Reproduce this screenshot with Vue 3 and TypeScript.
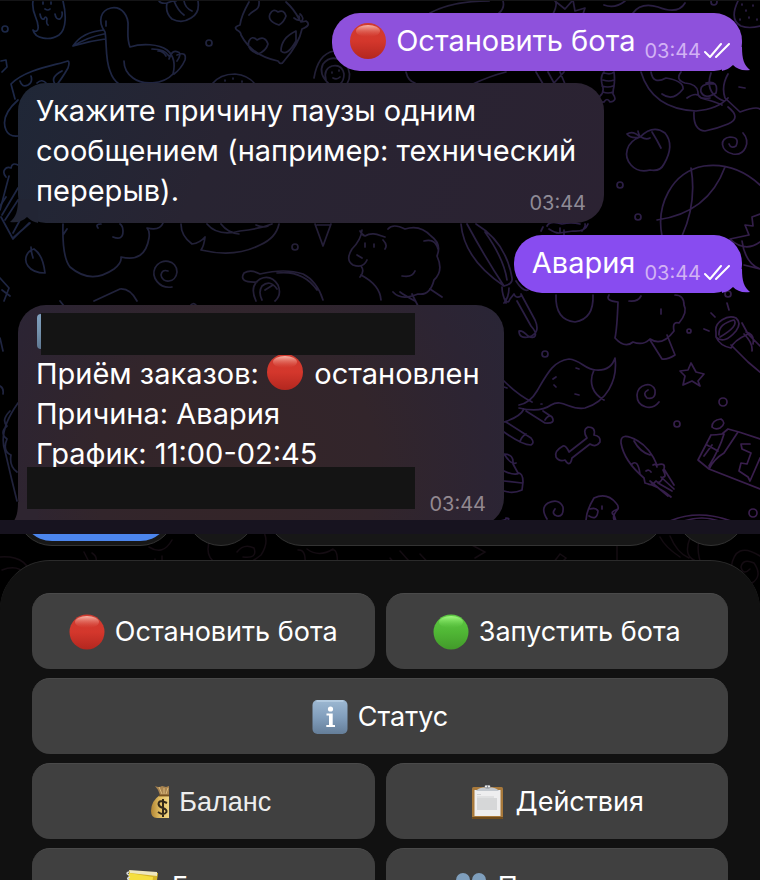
<script setup lang="ts">
interface KeyButton {
  icon: 'red' | 'green' | 'info' | 'bag' | 'clipboard' | 'ledger' | 'people'
  label: string
  wide?: boolean
  plain?: boolean
}

const keys: KeyButton[] = [
  { icon: 'red', label: 'Остановить бота' },
  { icon: 'green', label: 'Запустить бота' },
  { icon: 'info', label: 'Статус', wide: true },
  { icon: 'bag', label: 'Баланс', plain: true },
  { icon: 'clipboard', label: 'Действия' },
  { icon: 'ledger', label: 'Блокнот' },
  { icon: 'people', label: 'Поставщики' },
]

const circles: [number, number, number][] = [
  [5, 28, 3], [209, 42, 3], [295, 246, 3], [620, 184, 3], [638, 216, 3], [728, 293, 3],
  [545, 353, 3], [689, 330, 2], [723, 401, 4], [677, 423, 3], [753, 512, 4], [714, 1, 3],
]

const doodles: string[] = [
  // ghost
  'M33 0C31 12 38 17 38 25C39 31 35 31 33 29C35 38 50 40 59 34C67 28 66 12 63 0M40 13q1 6 4 5q2-4 3 0q-1 5 1 6M55 13q1 6 5 5q3-2 2-7M43 1v2M51 1v2M45 8q3 2 5 0',
  // pelican
  'M105 31C97 20 101 9 111 7C122 5 129 15 128 26C128 34 127 38 130 46C142 42 159 43 167 49C173 54 176 61 173 73C163 84 142 84 133 77C126 72 124 67 124 60M105 31C107 42 105 58 110 70Q113 79 119 83M106 20v5M104 29Q82 31 73 45Q89 40 105 38M104 33Q88 36 73 45M152 48Q165 48 169 55M158 50q5 0 8 5M169 58Q172 48 178 51C181 52 180 56 177 60M177 54Q187 50 185 59Q181 68 174 73',
  // basket
  'M159 0q2 3 8 2q-2 10 5 16q10 5 19-1q9-5 7-17M174 0q4 10 10 14M184 0q1 7 8 10M167 2q8-3 9-2',
  // cat with hearts
  'M249 1Q241 15 240 24Q233 26 237 29Q241 31 241 34Q252 55 278 60Q281 65 284 60Q299 43 302 28Q312 24 306 20Q300 22 299 18Q294 8 286 1M249 14C254 8 260 10 259 0M279 24Q267 20 270 13Q273 7 278 11Q284 8 286 15Q284 21 279 24M258 53Q246 48 249 40Q252 34 257 39Q265 34 268 43Q266 50 258 53M296 30Q281 37 281 50Q287 56 296 40ZM294 17q7 5 5-2M300 13q5 4 1 8',
  'M314 77Q318 53 334 50M329 83Q318 73 323 63Q332 52 345 62Q353 73 347 83M326 79q-3-11 6-14q10-2 12 8q0 7-4 10M332 71v1M339 69v1M333 77q4 2 7-1',
  'M212 83Q220 73 235 73Q248 74 255 83M225 79v1M233 77v1M242 80v1',
  // pizza slice and cone
  'M1 60L6 59L7 66L2 71M11 83C25 68 57 64 68 60Q70 61 68 67Q61 79 55 86M11 83L15 98M20 80q2 7 8 4q5-3 3-9M37 82q5-5 10 1M55 83Q50 76 62 70M18 99Q0 115 6 129Q9 136 18 135',
  'M6 176C1 170 6 165 11 167Q12 161 18 164M9 175L0 209M18 187L2 214M18 199L5 219M1 216L13 238L29 222M26 208L13 232M30 222L13 237',
  // small leaf and lower left scraps
  'M31 246C31 253 33 255 33 257M34 248C27 250 23 258 28 265Q33 272 45 272Q43 254 34 248M0 277L9 287L4 300M2 289l8 6M94 300L120 288Q130 287 137 300M0 337l3 13M0 385q4 2 3 8M18 402Q-2 430 5 450Q11 476 17 500M10 410q-9 9-3 15q-8 7 0 13q-5 12 4 16q-2 11 6 17',
  // broccoli
  'M63 223Q62 256 70 266Q91 284 114 268Q122 262 121 256Q145 262 149 237Q150 230 147 227Q160 230 163 222M63 234l4-6M101 223q-6 0-3 4M113 236q10 4 10-6q0-5-3-7',
  // swirl
  'M172 286C159 288 151 276 155 267C161 256 177 259 177 271C176 282 162 283 161 274Q162 268 168 270',
  // croissant, spoon, fox, lamb
  'M181 223Q181 235 192 243Q200 242 205 236Q204 245 201 249Q235 257 260 244Q276 237 279 223M207 223Q218 236 240 230M221 223q7 9 18 10M240 230q19-2 32-7M256 224q7 3 12 1',
  'M315 223L323 245L331 223M317 224h13',
  'M360 230Q362 234 365 235C373 230 380 235 385 236M362 229Q361 239 352 248Q345 259 353 264Q363 268 367 259M365 242v4M374 243v3M357 254l5 3M361 265q4 5-1 11M361 274q19 10 20 25M388 228Q393 222 405 228Q420 223 431 235Q442 243 437 255Q444 270 434 279Q430 295 418 293Q401 300 393 291M383 239q5 5 2 9M424 240q11-3 14 8M402 275q10 2 13-5',
  'M256 300Q249 285 260 278Q271 273 278 284Q282 294 275 300M257 281q-19 1-13-9q7-4 16 1Q285 267 303 273Q317 280 323 299M262 299q-4-8 0-14q8-7 15 3M265 289l8-5M277 272q26-3 40 17',
  // umbrella
  'M461 223Q464 258 504 285Q513 283 512 277Q506 241 476 223M467 223Q486 258 504 285M485 231Q504 258 507 279M502 286q0 7 4 16M516 280q7 11 12 9M509 287q0 9-5 15M505 298q3 6 5 0l4-5q2 5 7 2M517 300L531 325C539 334 535 339 528 335Q522 329 519 330Q519 338 529 336Q541 332 535 319L521 293',
  'M541 230l2-4M547 225Q550 219 562 223Q571 221 580 223M549 228q6 4 10 4l14-2q12 1 15-7M560 227v5M564 229v6M582 230q4-5 3-7',
  // egg and tree
  'M556 294Q555 319 575 321Q594 318 593 294M609 294Q605 300 618 301Q617 328 615 337Q625 348 633 341Q643 345 650 338Q662 346 674 330Q672 320 679 322Q688 311 684 304Q684 294 675 294M629 300q9 1 12-5M661 308v5M650 339L662 358Q667 359 675 354L667 334',
  // top scraps
  'M430 12Q452 0 489 0M503 0q2 7-4 12M553 13q5-10 2-13l10 8l8-9l2 11l10-3l-2 6M604 4q11 4 21-4M633 12Q641 1 658 6Q678 14 685 2M738 0q-9 19 3 25q8 3 19 0M742 3v1M746 9v1M753 4v1M749 16v1M757 18v1M740 18v1',
  // sausage and plate
  'M406 71Q408 80 415 82M473 83Q490 75 506 71M536 71L543 83M548 71L554 82L564 71M560 71l5 12M604 72q7 2 10-1q1 7 0 14q-1 4-1 8q5 7-3 8q-3-5-6 0q-7 1-4-6q5-4 2-12q-2-8 2-12M603 79q6 2 11 0M602 85q6 2 11 0M603 91q5 2 10 0',
  'M641 71Q652 108 696 110Q718 108 728 97M651 71q2 13 15 6q18 3 17 11q-10 13-21 5M681 71q-6 8 4 11q12 1 13 9q-1 8 12 6M687 97q10-7 14 0q18 5 21 7M706 82q13-3 10 10q-11 7-15-1q-2-9 13-8M711 72q-7 20 13 28M728 73q-7 12-3 24l15 14Q756 105 760 108M739 86l6 1M694 111Q693 129 705 130Q716 128 728 123Q742 117 728 106',
  // apple
  'M640 136C626 141 623 155 631 164Q638 172 650 169Q660 171 664 163Q675 144 665 132Q653 123 640 136ZM640 136q-7-7-13-3q4 5 13 3q-2-5-2-6M652 131q5 8 9 16M641 136q5 3 9 1',
  'M743 132C751 141 745 155 733 153C720 150 719 137 730 136Q740 136 736 145Q731 148 729 143',
  // ball
  'M662 235C656 205 671 171 704 165Q735 161 760 184M691 167Q697 201 682 235M725 166Q708 212 657 219M760 213l-8 3l1 9l-8-1l4 10l-19 4q15 14 30 3M744 264l16 4M742 240q3 22 18 28',
  // fox with a bushy tail
  'M519 404Q530 402 537 390C547 373 553 360 569 358C581 359 585 369 596 369Q611 370 615 357C618 380 606 401 585 407C570 410 563 397 551 404Q540 412 519 407M594 369C588 382 593 393 604 399M553 378l3-2M554 384l2 2M576 367l3 1M575 393l4 1M541 403h1M504 380Q518 394 532 401M504 386l3 1M524 408Q520 416 504 421M526 410L545 422Q556 423 552 416L543 410M545 419q3-5 6-4M504 431Q522 444 531 444Q535 442 531 437L506 421M520 441q1-5 6-8',
  // bone
  'M563 445Q554 450 556 456Q559 461 565 459Q570 467 572 457L590 443Q596 447 600 441Q601 435 594 434Q596 426 588 426Q582 429 587 437L569 451Q566 444 563 445Z',
  // small swirl, star
  'M659 401C652 410 637 407 637 394C638 383 652 380 655 389Q656 399 647 397Q642 392 648 389',
  'M691 362L696 371L704 373L698 380L700 385L692 380L683 384L685 375L680 370L688 369Z',
  // torch
  'M716 331C714 321 728 313 736 317Q742 322 736 330Q724 344 716 336ZM719 334q-1-11 15-15q5 6-14 17M742 322L748 333Q733 340 731 347Q720 345 716 336M744 333Q753 342 752 350M731 344L748 361L760 371M748 333L760 345M746 331q9 2 7 12M727 302l2 7M711 312l4 4M704 328l5 2',
  // rocket
  'M621 442Q620 430 638 440Q650 447 657 464Q666 461 664 468L674 484M621 442Q624 460 644 477L645 482Q659 485 671 496M634 440Q640 451 650 454M632 463Q638 458 640 473M646 470q3-2 5 1M653 464q3-2 4 2M648 483q4 2 8-3q4 4 7-4q4 0 0-7M658 482L672 490M661 476L674 488M650 480L668 495',
  // gift box
  'M711 434L698 459L709 468L760 488M711 434Q716 434 722 433L728 428L739 431L760 438M707 444l11 6M704 455l8-11M709 468Q714 458 724 452L738 431M724 433Q720 447 709 465M712 426q0-7 9-8q6 4-1 9q-5 2-8-1M750 443L741 443L742 448L751 452L747 463L741 462L739 470L748 476L750 480L760 457',
  // cupcake, chick, swirl, plate
  'M504 490Q513 493 522 489L523 481Q523 472 518 472L513 463Q514 453 504 453Q511 464 516 462M504 480L522 482M504 470q11 5 15 2',
  'M547 518Q540 507 548 502Q559 497 563 506Q564 516 557 515Q551 513 555 508M586 520Q586 510 594 497Q607 491 616 502Q619 505 618 508Q609 511 614 514L616 520M589 515q8 5 9-5q-2-4-8-2M602 505v3M618 508q-7 8-3 12M500 520q7-1 6-3q5 0 1 3',
  'M670 520Q698 508 731 520M684 520Q702 514 719 520',
  'M400 291q4 3 15 9M430 288l12 8M412 293l6 12M190 305q3-4 6-1M0 205l6-9M60 300l4 5',
]

const faint: string[] = [
  'M0 23q29-2 32 23M2 36q15-6 24 4M72 27q2 14 8 10q8 3 13-3q7-10-1-15M84 18l5 10M149 13q14 9 23-7M155 25v10M162 22v11M210 5q-6 17 6 24q17 14 45-8q10-15 0-27M237 18q7-9 17-4q4 11-11 9M298 16q10-1 6 21M332 16q7-2 5 21M307 15q12 9 26 0',
  'M390 24l12 14M400 17l17 19M420 20l17 18M470 10l15 8l-10 6M550 33l10-13l6 4l-13 13M617 11v29M660 3q5 10 20 20M670 2q7 17 19 22M690 4q-8 20 9 24M700 4q-5 11 3 32M692 30q5-6 10 0',
  'M760 22q-25-16-29 12q2 18 21 15q11-7 2-20q-11-5-13 4q2 9 9 2',
]
</script>

<template>
  <main class="page">
    <section class="chat">
      <svg class="wallpaper" viewBox="0 0 760 520" preserveAspectRatio="xMidYMin slice" aria-hidden="true">
        <defs>
          <linearGradient id="ink" gradientUnits="userSpaceOnUse" x1="0" y1="80" x2="760" y2="480">
            <stop offset="0" stop-color="#1c2848" />
            <stop offset="0.35" stop-color="#231f35" />
            <stop offset="0.7" stop-color="#2b1e45" />
            <stop offset="1" stop-color="#3a1e4d" />
          </linearGradient>
        </defs>
        <g fill="none" stroke="url(#ink)" stroke-width="1.7" stroke-linecap="round" stroke-linejoin="round">
          <path v-for="(d, i) in doodles" :key="i" :d="d" />
          <circle v-for="(c, i) in circles" :key="'c' + i" :cx="c[0]" :cy="c[1]" :r="c[2]" />
        </g>
      </svg>

      <article class="bubble out first">
        <p class="text">
          <svg class="emoji" viewBox="0 0 36 36" aria-hidden="true"><circle cx="18" cy="18" r="18" fill="url(#redBall)" /><ellipse cx="18" cy="8" rx="12" ry="6" fill="url(#shine)" /></svg>
          Остановить бота
        </p>
        <span class="meta"><time>03:44</time>
          <svg class="ticks" viewBox="0 0 26 16" aria-hidden="true"><path d="M1 9L6 14L17 1M12 14L25 1" /></svg>
        </span>
        <svg class="tail" viewBox="0 0 28 24" aria-hidden="true"><path d="M20 0C20 12 22 18 28 23C20 24 15 22 11 18C7 22 3 23 0 24V0Z" /></svg>
      </article>

      <article class="bubble in reason">
        <p class="text">Укажите причину паузы одним сообщением (например: технический перерыв).</p>
        <time class="corner">03:44</time>
        <svg class="tail" viewBox="0 0 28 24" aria-hidden="true"><path d="M8 0C8 12 6 18 0 23C8 24 13 22 17 18C21 22 25 23 28 24V0Z" /></svg>
      </article>

      <article class="bubble out second">
        <p class="text">Авария</p>
        <span class="meta"><time>03:44</time>
          <svg class="ticks" viewBox="0 0 26 16" aria-hidden="true"><path d="M1 9L6 14L17 1M12 14L25 1" /></svg>
        </span>
        <svg class="tail" viewBox="0 0 28 24" aria-hidden="true"><path d="M20 0C20 12 22 18 28 23C20 24 15 22 11 18C7 22 3 23 0 24V0Z" /></svg>
      </article>

      <article class="bubble in status">
        <div class="cover top"></div>
        <p class="text line">
          Приём заказов:
          <svg class="emoji" viewBox="0 0 36 36" aria-hidden="true"><circle cx="18" cy="18" r="18" fill="url(#redBall)" /><ellipse cx="18" cy="8" rx="12" ry="6" fill="url(#shine)" /></svg>
          остановлен
        </p>
        <p class="text">Причина: Авария</p>
        <p class="text">График: 11:00-02:45</p>
        <div class="cover bottom"></div>
        <time class="corner">03:44</time>
        <svg class="tail" viewBox="0 0 28 24" aria-hidden="true"><path d="M8 0C8 12 6 18 0 23C8 24 13 22 17 18C21 22 25 23 28 24V0Z" /></svg>
      </article>
    </section>

    <div class="divider"></div>

    <section class="bottom-area">
      <svg class="wallpaper" viewBox="0 0 760 60" preserveAspectRatio="xMidYMin slice" aria-hidden="true">
        <g fill="none" stroke="#140c12" stroke-width="1.5" stroke-linecap="round">
          <path v-for="(d, i) in faint" :key="i" :d="d" />
        </g>
      </svg>
      <div class="composer">
        <button class="menu" type="button" aria-label="Меню"></button>
        <button class="round" type="button" aria-label="Прикрепить"></button>
        <input class="field" type="text" aria-label="Сообщение" />
        <button class="round" type="button" aria-label="Голосовое сообщение"></button>
      </div>

      <div class="keyboard">
        <button v-for="key in keys" :key="key.label" type="button" class="key" :class="{ wide: key.wide, plain: key.plain }">
          <svg class="emoji" viewBox="0 0 36 36" aria-hidden="true">
            <template v-if="key.icon === 'red'">
              <circle cx="18" cy="18" r="17.5" fill="url(#redBall)" /><ellipse cx="18" cy="8" rx="12" ry="6" fill="url(#shine)" />
            </template>
            <template v-else-if="key.icon === 'green'">
              <circle cx="18" cy="18" r="17.5" fill="url(#greenBall)" /><ellipse cx="18" cy="8" rx="12" ry="6" fill="url(#greenShine)" />
            </template>
            <template v-else-if="key.icon === 'info'">
              <rect x="0.5" y="1" width="35" height="34" rx="5" fill="url(#infoTile)" />
              <path d="M5 2H31" stroke="#b9cfe4" stroke-width="1.4" stroke-linecap="round" />
              <circle cx="18.5" cy="10" r="2.6" fill="#fff" />
              <path d="M14.5 14.5H20.7V26H23V28H14.3V26H17V16.5H14.5Z" fill="#fff" />
            </template>
            <template v-else-if="key.icon === 'bag'">
              <path d="M20 2Q24 4 27 2L31 3L34 2V11Q32 12 25 11Q24 6 20 2Z" fill="#a98450" />
              <path d="M24 3L27 10M29 4V10M33 4L31 10" stroke="#d9ba7c" stroke-width="1" fill="none" />
              <path d="M25 11H34V34H22Q16 34 16 27Q16 17 25 11Z" fill="url(#bagGold)" />
              <path d="M24 11.5H34" stroke="#75511e" stroke-width="1.8" />
              <path d="M32 19Q24 15 23.5 20Q24 23 28 24Q32 25.5 31.5 28Q29 32 23 28M28 15V33" stroke="#33291a" stroke-width="2" fill="none" />
            </template>
            <template v-else-if="key.icon === 'clipboard'">
              <rect x="2" y="3" width="31" height="32" rx="1.5" fill="#a8793b" />
              <path d="M2 33H33V34Q33 35 32 35H3Q2 35 2 34Z" fill="#6f4b1d" />
              <path d="M4.5 6H30.5V32H4.5Z" fill="#eeeeef" />
              <path d="M7 14H27V26H7Z" fill="#d6d7d8" />
              <path d="M7 10.5H11M7 13H24" stroke="#c9cacd" stroke-width="0.8" />
              <path d="M6 7Q8 4 13 3.5H22Q27 4 29 7Z" fill="#c3c8ce" />
              <rect x="14.5" y="1" width="6" height="3.5" rx="1.7" fill="#8b9097" />
              <circle cx="16" cy="2.5" r="0.9" fill="#fff" /><circle cx="19" cy="2.5" r="0.9" fill="#fff" />
            </template>
            <template v-else-if="key.icon === 'ledger'">
              <path d="M3 2L32 4L28 34L1 31Z" fill="#d6b62a" />
              <path d="M3 1L31 3V7L4 4Z" fill="#eee7be" />
              <path d="M3 4L27 8L24 34L1 30Z" fill="#f5df3f" />
              <path d="M3 3Q-1 4 3 6M4 8Q0 9 3 11" fill="none" stroke="#d7dadd" stroke-width="1.5" />
            </template>
            <template v-else>
              <circle cx="11" cy="11" r="7" fill="#7f9fbd" /><circle cx="27" cy="11" r="7" fill="#7f9fbd" />
              <path d="M0 34Q2 20 11 20T22 34M17 34Q19 20 27 20T36 34" fill="#6486a7" />
            </template>
          </svg>
          <span>{{ key.label }}</span>
        </button>
      </div>
    </section>

    <svg class="defs" aria-hidden="true">
      <defs>
        <linearGradient id="redBall" x1="0" y1="0" x2="0" y2="1"><stop offset="0" stop-color="#cf3b30" /><stop offset="0.5" stop-color="#d4372c" /><stop offset="1" stop-color="#b3271f" /></linearGradient>
        <linearGradient id="greenBall" x1="0" y1="0" x2="0" y2="1"><stop offset="0" stop-color="#5fc845" /><stop offset="0.5" stop-color="#50b735" /><stop offset="1" stop-color="#429a2a" /></linearGradient>
        <linearGradient id="shine" x1="0" y1="0" x2="0" y2="1"><stop offset="0" stop-color="#f7b5a8" /><stop offset="1" stop-color="#e05a4c" stop-opacity="0" /></linearGradient>
        <linearGradient id="greenShine" x1="0" y1="0" x2="0" y2="1"><stop offset="0" stop-color="#a2fb80" /><stop offset="1" stop-color="#67cf4b" stop-opacity="0" /></linearGradient>
        <linearGradient id="infoTile" x1="0" y1="0" x2="0" y2="1"><stop offset="0" stop-color="#9db8d2" /><stop offset="0.5" stop-color="#829fbd" /><stop offset="1" stop-color="#657e99" /></linearGradient>
        <linearGradient id="bagGold" x1="0" y1="0" x2="1" y2="0"><stop offset="0" stop-color="#b08434" /><stop offset="0.5" stop-color="#e3bf63" /><stop offset="1" stop-color="#f0d583" /></linearGradient>
      </defs>
    </svg>
  </main>
</template>

<style>
body {
  margin: 0;
  background: #000;
}
</style>

<style scoped>
.page {
  height: 100vh;
  overflow: hidden;
  background: #000;
  color: #fff;
  font-family: Inter, "Noto Sans", sans-serif;
}
.defs {
  position: absolute;
  width: 0;
  height: 0;
}
.chat {
  position: relative;
  display: flex;
  flex-direction: column;
  align-items: flex-start;
  gap: 12px;
  padding: 12px 18px 0;
  overflow: hidden;
  border-top: 1px solid #141416;
  box-sizing: border-box;
}
.wallpaper {
  position: absolute;
  top: 0;
  left: 0;
  width: 100%;
  height: 100%;
}
.bubble {
  position: relative;
  isolation: isolate;
  box-sizing: border-box;
  border-radius: 28px;
}
.text {
  margin: 0;
  font-size: 29px;
  line-height: 40px;
}
.emoji {
  flex: none;
  width: 36px;
  height: 36px;
}
.line .emoji {
  margin-right: 3px;
  vertical-align: -6px;
}
time {
  font-size: 20px;
  line-height: 24px;
}
.out {
  align-self: flex-end;
  display: flex;
  align-items: center;
  gap: 9px;
  height: 58px;
  padding: 0 12px 2px 18px;
}
.out .text {
  display: flex;
  align-items: center;
  gap: 10px;
}
.first {
  background: #8e51dc;
}
.second {
  background: #884cf0;
}
.first .tail {
  fill: #8e51dc;
}
.second .tail {
  fill: #884cf0;
}
.meta {
  display: flex;
  align-items: center;
  gap: 3px;
  padding-top: 20px;
  color: #d2b2f4;
}
.ticks {
  width: 26px;
  height: 16px;
  fill: none;
  stroke: #fff;
  stroke-width: 2;
  stroke-linecap: round;
  stroke-linejoin: round;
}
.tail {
  position: absolute;
  z-index: -1;
  bottom: 0;
  width: 28px;
  height: 24px;
}
.out .tail {
  right: -8px;
}
.in {
  padding: 8px 18px;
}
.in .tail {
  left: -8px;
}
.in time {
  color: #8f8b96;
}
.corner {
  position: absolute;
  right: 18px;
  bottom: 8px;
}
.reason {
  width: 586px;
  max-width: 100%;
  padding-bottom: 12px;
  background: linear-gradient(115deg, #1f2737 0%, #282432 35%, #2b2232 100%);
}
.reason .tail {
  fill: #222534;
}
.status {
  width: 486px;
  max-width: 100%;
  padding-bottom: 13px;
  margin-bottom: -6px;
  background: radial-gradient(circle at 45% 75%, #342528 0%, #32252b 45%, #2c2433 80%, #292536 100%);
}
.status .tail {
  fill: #2e2530;
}
.status .corner {
  bottom: 10px;
  color: #938990;
}
.cover {
  position: relative;
  height: 42px;
  background: #141414;
}
.cover.top {
  width: 374px;
  margin: 0 0 -1px 5px;
}
.cover.top::before {
  content: "";
  position: absolute;
  top: 1px;
  left: -4px;
  width: 4px;
  height: 35px;
  border-radius: 4px 0 0 4px;
  background: linear-gradient(#7fa0bf, #7592ad 50%, #5f7892);
}
.cover.bottom {
  width: 388px;
  margin: -7px 0 4px -9px;
}
.line {
  white-space: nowrap;
}
.divider {
  height: 14px;
  background: #17131f;
}
.bottom-area {
  position: relative;
}
.bottom-area .wallpaper {
  height: 60px;
}
.composer {
  position: relative;
  display: flex;
  align-items: flex-end;
  gap: 9px;
  height: 12px;
  padding: 0 13px 14px 16px;
  overflow: hidden;
}
.composer > * {
  box-sizing: border-box;
  height: 72px;
  flex: none;
  padding: 0;
  border: 1px solid #333;
  border-radius: 36px;
  background: #171717;
}
.menu {
  width: 160px;
}
.menu::before {
  content: "";
  display: block;
  height: 62px;
  margin: 4px;
  border-radius: 31px;
  background: #4c86ee;
}
.round {
  width: 72px;
}
.composer .field {
  flex: 1;
  min-width: 0;
}
.keyboard {
  position: relative;
  display: grid;
  grid-template-columns: 1fr 1fr;
  gap: 9px 11px;
  padding: 32px;
  border-top: 1px solid #2b2b2b;
  border-radius: 50px 50px 0 0;
  background: #111;
}
.key {
  display: flex;
  align-items: center;
  justify-content: center;
  gap: 10px;
  height: 76px;
  padding: 0 16px;
  border: 0;
  border-top: 1px solid #4a4a4a;
  border-radius: 18px;
  background: #404040;
  color: #fff;
  font: 27px/36px Inter, "Noto Sans", sans-serif;
}
.wide {
  grid-column: 1 / -1;
}
.plain {
  gap: 8px;
  color: #eee;
  font-family: "Liberation Sans", sans-serif;
}
</style>
